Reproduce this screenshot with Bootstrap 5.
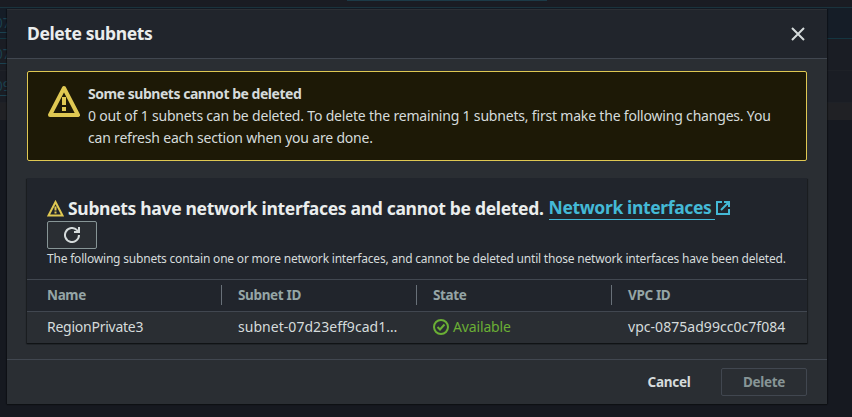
<!DOCTYPE html>
<html lang="en" data-bs-theme="dark">
<head>
<meta charset="utf-8">
<meta name="viewport" content="width=device-width, initial-scale=1">
<title>Delete subnets</title>
<link href="https://cdn.jsdelivr.net/npm/bootstrap@5.3.0/dist/css/bootstrap.min.css" rel="stylesheet">
<style>
  body { font-family: "Noto Sans", sans-serif; font-size: 14px; line-height: 22px; color: #d5dbdb; background: #161920; height: 417px; }
  /* dimmed page behind the dialog */
  .page-top { height: 7px; background: #1a1c23; }
  .tab-line { width: 200px; height: 1px; margin-left: 347px; background: #1c3a47; }
  .page-row { height: 32px; padding-top: 4px; background: #1a1d24; border-bottom: 1px solid #1e2127; overflow: hidden; }
  .page-row.chosen { background: #151d27; border-top: 1px solid #1a333d; border-bottom-color: #143540; }
  .row-link { display: inline-block; margin-left: -5px; color: #1b414f; text-decoration: none; border-bottom: 1px solid #1b414f; line-height: 18px; font-size: 13.5px; }
  .page-band { height: 17px; background: #202125; }

  .dialog-frame { left: 7px; top: 9px; width: 820px; height: 395px; }
  .dialog-box { height: 395px; border: 0; border-radius: 0; background: #2a2e33; color: #d5dbdb; box-shadow: 0 1px 1px #0d1013, -1px 0 1px rgba(0,0,0,.3), 1px 0 1px rgba(0,0,0,.3); }
  .dialog-head { height: 50px; padding: 0 20px; background: #21252c; border-top: 1px solid #2d3035; border-bottom: 1px solid #414750; border-radius: 0; }
  .dialog-title { font-size: 17.5px; line-height: 22px; padding-bottom: 2px; font-weight: 700; color: #eaeded; letter-spacing: -.4px; }
  .dialog-body { padding: 12px 20px 0; }
  .dialog-foot { height: 45px; padding: 0 20px; gap: 0; border-top: 1px solid #414750; border-radius: 0; }
  .close-btn { width: 18px; height: 18px; color: #d5dbdb; line-height: 0; }

  .warn { height: 90px; padding: 11px 20px; margin: 0 0 17px; border: 1px solid #dfc852; border-radius: 2px; background: #1d1906; color: #d5dbdb; }
  .warn strong { letter-spacing: -.47px; }
  .warn-text { letter-spacing: -.19px; white-space: nowrap; }
  .panel { height: 165px; border: 0; border-radius: 0; background: #2a2e33; box-shadow: 0 1px 1px #101315, 1px 1px 1px rgba(0,0,0,.3), -1px 1px 1px rgba(0,0,0,.3); }
  .panel-head { height: 101px; padding: 17px 20px 0; background: #21252c; }
  .panel-title { height: 26px; font-size: 17.5px; line-height: 25px; font-weight: 700; color: #eaeded; letter-spacing: -.32px; margin: 0; white-space: nowrap; }
  .ext-link { color: #44b9d6; text-decoration: none; border-bottom: 1px solid #44b9d6; height: 24px; line-height: 23px; padding-right: 4px; margin-left: 5px; letter-spacing: -.36px; }
  .refresh { width: 50px; height: 28px; border: 1px solid #879596; border-radius: 2px; background: #2a2e33; color: #d5dbdb; }
  .panel-desc { font-size: 12px; line-height: 20px; letter-spacing: -.2px; white-space: nowrap; }
  .subnets { table-layout: fixed; margin: 0; width: 780px; line-height: 22px; --bs-table-bg: transparent; --bs-table-color: #d5dbdb; }
  .subnets th, .subnets td { border: 0; padding: 0 0 0 16px; white-space: nowrap; vertical-align: middle; }
  .subnets th:first-child, .subnets td:first-child { padding-left: 20px; }
  .subnets th { height: 32px; background: #21252c; color: #95a5a6; border-top: 1px solid #414750; border-bottom: 1px solid #414750; font-size: 13.5px; letter-spacing: -.35px; }
  .subnets td { height: 32px; letter-spacing: -.25px; }
  .subnets td.ident { letter-spacing: .04px; }
  .col-label { display: block; height: 20px; line-height: 20px; }
  .split { border-right: 1px solid #687078; }
  .ok { color: #6aaf35; letter-spacing: -.15px; }
  .act { width: 86px; height: 28px; padding: 0; border: 1px solid #414750; border-radius: 2px; font-size: 13.5px; font-weight: 700; line-height: 26px; letter-spacing: -.3px; color: #879596; }
  .act.plain { width: 84px; border-color: transparent; color: #d5dbdb; margin-right: 10px !important; }
</style>
<script src="https://cdn.jsdelivr.net/npm/bootstrap@5.3.0/dist/js/bootstrap.bundle.min.js"></script>
</head>
<body class="overflow-hidden position-relative">
  <div aria-hidden="true">
    <div class="page-top"><div class="tab-line"></div></div>
    <div class="page-row chosen"><a class="row-link">07</a></div>
    <div class="page-row"><a class="row-link">07</a></div>
    <div class="page-row"><a class="row-link">09</a></div>
    <div class="page-band"></div>
  </div>

  <div class="dialog-frame position-absolute" role="dialog" aria-label="Delete subnets">
    <div class="dialog-box modal-content">
      <header class="dialog-head modal-header">
        <h1 class="dialog-title m-0">Delete subnets</h1>
        <button class="close-btn btn p-0 border-0" aria-label="Close"><svg width="18" height="18" viewBox="0 0 18 18" fill="none" stroke="currentColor" stroke-width="2"><path d="M3 3l12 12M15 3L3 15"/></svg></button>
      </header>

      <div class="dialog-body modal-body">
        <div class="warn alert d-flex" role="alert">
          <svg class="flex-shrink-0" width="32" height="36" viewBox="0 0 32 36" fill="none" stroke="#dfc852" stroke-width="4"><path d="M16 5L30 32H2z" stroke-linejoin="round"/><path d="M16 14v8M16 24v4"/></svg>
          <div class="ms-2">
            <strong class="d-block">Some subnets cannot be deleted</strong>
            <div class="warn-text">0 out of 1 subnets can be deleted. To delete the remaining 1 subnets, first make the following changes. You<br>can refresh each section when you are done.</div>
          </div>
        </div>

        <section class="panel card">
          <div class="panel-head">
            <h2 class="panel-title d-flex align-items-center">
              <svg class="me-1" width="17" height="17" viewBox="0 0 17 17" fill="none" stroke="#dfc852" stroke-width="2"><path d="M8.5 2L15.500 15.500H1.500z"/><path d="M8.500 6.500v4M8.500 11.500v2"/></svg>
              <span>Subnets have network interfaces and cannot be deleted.</span>
              <a class="ext-link">Network interfaces</a>
              <svg width="16" height="16" viewBox="0 0 16 16" fill="none" stroke="#44b9d6" stroke-width="2"><path d="M7 2H2v12h12V9M9 2h5v5M14 2L6 10"/></svg>
            </h2>
            <button class="refresh btn p-0 d-flex align-items-center justify-content-center" aria-label="Refresh"><svg width="16" height="16" viewBox="0 0 16 16" fill="none" stroke="currentColor" stroke-width="2"><path d="M15 8a7 7 0 1 1-2-4.900L15 5M15 0v5h-5"/></svg></button>
            <div class="panel-desc">The following subnets contain one or more network interfaces, and cannot be deleted until those network interfaces have been deleted.</div>
          </div>
          <table class="subnets table">
            <colgroup><col style="width:195px"><col style="width:195px"><col style="width:195px"><col></colgroup>
            <thead><tr>
              <th><span class="col-label split">Name</span></th>
              <th><span class="col-label split">Subnet ID</span></th>
              <th><span class="col-label split">State</span></th>
              <th><span class="col-label">VPC ID</span></th>
            </tr></thead>
            <tbody><tr>
              <td>RegionPrivate3</td>
              <td class="ident">subnet-07d23eff9cad1…</td>
              <td><span class="ok d-flex align-items-center gap-1"><svg width="16" height="16" viewBox="0 0 16 16" fill="none" stroke="currentColor" stroke-width="2"><circle cx="8" cy="8" r="7"/><path d="M4.500 8l2.500 2.500 4.500-5"/></svg>Available</span></td>
              <td class="ident">vpc-0875ad99cc0c7f084</td>
            </tr></tbody>
          </table>
        </section>
      </div>

      <footer class="dialog-foot modal-footer">
        <button class="act plain btn m-0">Cancel</button>
        <button class="act btn m-0">Delete</button>
      </footer>
    </div>
  </div>
</body>
</html>
